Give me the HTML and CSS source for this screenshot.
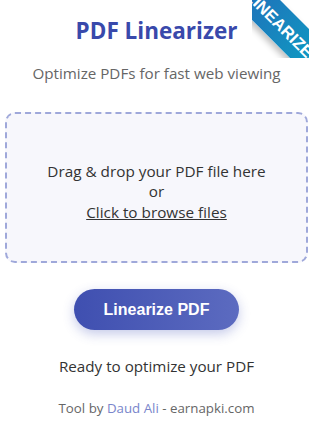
FILE: index.html
```html
<!DOCTYPE html>
<html lang="en">
<head>
<meta charset="utf-8">
<title>PDF Linearizer</title>
<link rel="stylesheet" href="styles.css">
</head>
<body>
<div class="ribbon-wrap"><div class="ribbon">LINEARIZED</div></div>
<main class="container">
  <h1 class="title">PDF Linearizer</h1>
  <p class="subtitle">Optimize PDFs for fast web viewing</p>
  <div class="dropzone">
    <p>Drag &amp; drop your PDF file here</p>
    <p>or</p>
    <p><span class="browse">Click to browse files</span></p>
  </div>
  <div class="actions"><button class="btn">Linearize PDF</button></div>
  <p class="status">Ready to optimize your PDF</p>
  <p class="footer">Tool by <a class="author">Daud Ali</a> - earnapki.com</p>
</main>
</body>
</html>
```
FILE: styles.css
```css
html, body {
  margin: 0;
  padding: 0;
  background: #ffffff;
}
body {
  font-family: "Open Sans", "Noto Sans", sans-serif;
  color: #333;
  position: relative;
  overflow: hidden;
  height: 424px;
}
.container {
  width: 303px;
  margin-left: 5px;
  display: flex;
  flex-direction: column;
  align-items: stretch;
  text-align: center;
}
.title {
  margin: 16px 0 0;
  font-size: 22.5px;
  line-height: 30px;
  font-weight: 700;
  color: #3949ab;
}
.subtitle {
  margin: 17px 0 0;
  font-size: 15.2px;
  line-height: 20px;
  color: #666;
}
.dropzone {
  margin-top: 29px;
  height: 151px;
  box-sizing: border-box;
  padding-top: 8px;
  border: 2px dashed #9fa8da;
  border-radius: 10px;
  background: #f7f7fc;
  display: flex;
  flex-direction: column;
  justify-content: center;
  font-size: 15.3px;
  line-height: 20.5px;
  color: #333;
}
.dropzone p { margin: 0; }
.browse { text-decoration: underline; cursor: pointer; }
.actions {
  margin-top: 26px;
  display: flex;
  justify-content: center;
}
.btn {
  width: 165px;
  height: 41px;
  border: none;
  border-radius: 21px;
  background: linear-gradient(90deg, #3f4fb0, #5c6bc0);
  color: #fff;
  font-family: "Liberation Sans", Arial, sans-serif;
  font-weight: 700;
  font-size: 16px;
  box-shadow: 0 4px 12px rgba(63, 81, 181, 0.3);
}
.status {
  margin: 26px 0 0;
  font-size: 15.2px;
  line-height: 20px;
  color: #333;
}
.footer {
  margin: 23px 0 0;
  font-size: 13.3px;
  line-height: 18px;
  color: #666;
}
.author { color: #7986cb; text-decoration: none; }
.ribbon-wrap {
  position: absolute;
  top: 0;
  right: 0;
  width: 57px;
  height: 58px;
  overflow: hidden;
}
.ribbon {
  position: absolute;
  left: -43px;
  top: 11px;
  width: 150px;
  height: 34px;
  line-height: 34px;
  transform: rotate(45deg);
  background: linear-gradient(90deg, #2467b8, #0aa6c4);
  color: #fff;
  font-family: "Liberation Sans", Arial, sans-serif;
  font-weight: 700;
  font-size: 16.5px;
  text-align: center;
  box-shadow: 0 4px 6px rgba(0,0,0,0.25);
}
```
